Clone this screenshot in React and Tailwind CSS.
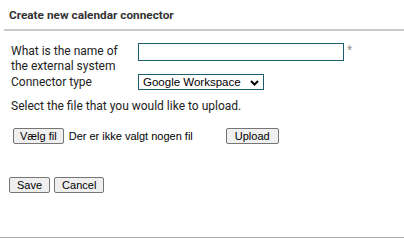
import React from "react";

const arial = "font-['Arial','Liberation_Sans',sans-serif]";
const btn =
  "h-4 bg-[#efefef] border border-[#767676] rounded-[2px] text-[11px] leading-[14px] text-black " +
  arial;

export default function App() {
  return (
    <div className="w-[404px] h-[240px] bg-white relative overflow-hidden font-['Roboto',sans-serif]">
      <div className="pl-[9px] pt-[7px] h-[29px] text-[11.8px] font-bold text-[#333]">
        Create new calendar connector
      </div>
      <div className="ml-1 h-[2px] bg-[#cacaca]" />
      <div className="pl-[11px] pt-[12px]">
        <div className="flex">
          <div className="w-[127px] text-[12px] leading-[15px] text-[#222] pt-[1px]">
            What is the name of
            <br />
            the external system
          </div>
          <div className="flex items-start">
            <input
              type="text"
              className="w-[206px] h-[18px] border border-[#1d5e6e] outline-none"
            />
            <span className="ml-[3px] text-[12px] leading-[14px] text-[#999]">*</span>
          </div>
        </div>
        <div className="flex">
          <div className="w-[127px] text-[12px] leading-[15px] text-[#222] pt-[1px]">
            Connector type
          </div>
          <div className="relative w-[126px] h-[16px] border border-[#1d5e6e] flex items-center">
            <span className={"pl-[4px] text-[11.5px] leading-[14px] text-black " + arial}>
              Google Workspace
            </span>
            <svg
              className="absolute right-[4px] top-[5px]"
              width="9"
              height="6"
              viewBox="0 0 9 6"
            >
              <path d="M1 1 L4.5 4.5 L8 1" stroke="black" strokeWidth="2" fill="none" />
            </svg>
          </div>
        </div>
        <div className="mt-[9px] text-[12px] leading-[15px] text-[#222]">
          Select the file that you would like to upload.
        </div>
        <div className="mt-[14px] flex items-center pl-[2px]">
          <button className={btn + " px-[6px]"}>Vælg fil</button>
          <span className={"ml-[5px] text-[11px] leading-[16px] text-black " + arial}>
            Der er ikke valgt nogen fil
          </span>
          <button className={btn + " ml-[33px] px-[8px]"}>Upload</button>
        </div>
        <div className="mt-[33px] -ml-[2px] flex gap-[4px]">
          <button className={btn + " px-[7px]"}>Save</button>
          <button className={btn + " px-[7px]"}>Cancel</button>
        </div>
      </div>
      <div className="absolute left-0 right-0 top-[237px] h-px bg-[#aaa]" />
    </div>
  );
}
